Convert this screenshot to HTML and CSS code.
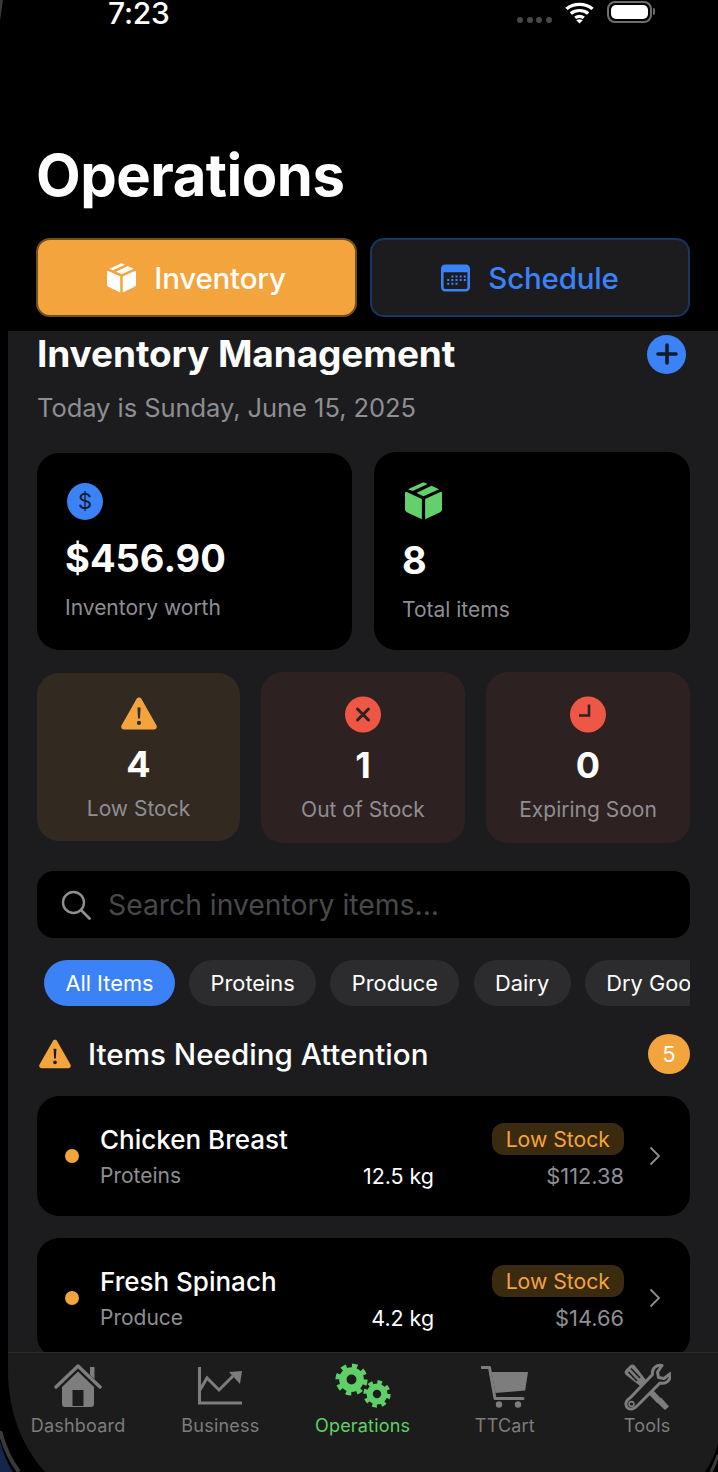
FILE: index.html
```html
<!DOCTYPE html>
<html lang="en">
<head>
<meta charset="utf-8">
<title>Operations</title>
<link rel="stylesheet" href="styles.css">
</head>
<body>
<svg class="defs" width="0" height="0" aria-hidden="true">
  <symbol id="box" viewBox="1.800 0 32.400 40" preserveAspectRatio="none">
    <path d="M12.600 3.200 17 .8c.7-.4 1.300-.4 2 0l2.600 1.400L8.600 9.600 4.400 7.500zM25 4l6.600 3.500L18 15l-6.200-3.400zM2.800 10.300 16.600 18v21.200L3.800 32c-1.300-.7-2-1.800-2-3.300V11.400c0-.4.400-.9 1-1.100zM33.200 10.300c.6.2 1 .7 1 1.100v17.300c0 1.500-.7 2.600-2 3.300l-12.800 7.200V18z"/>
  </symbol>
  <symbol id="warn" viewBox="0 0 36 32">
    <path fill-rule="evenodd" d="M15.500 1.600c1.100-2 3.900-2 5 0l14.900 26.200c1.100 1.900-.2 4.200-2.500 4.200H3.100C.8 32-.5 29.700.6 27.800zM16.400 10l.6 11h2l.6-11zM18 23.300a2.100 2.100 0 1 0 0 4.200 2.100 2.100 0 0 0 0-4.200z"/>
  </symbol>
  <symbol id="gear" viewBox="0 0 40 40">
    <circle cx="20" cy="20" r="16" fill="none" stroke="currentColor" stroke-width="7" stroke-dasharray="6.300 6.270"/>
    <circle cx="20" cy="20" r="10.500" fill="none" stroke="currentColor" stroke-width="9"/>
  </symbol>
</svg>

<main class="device">
  <header class="top">
    <div class="status">
      <span class="clock">7:23</span>
      <span class="signal"><i></i><i></i><i></i><i></i></span>
      <svg class="wifi" viewBox="0 0 30 24" preserveAspectRatio="none" aria-hidden="true">
        <path d="M1.500 7.500C9 1 21 1 28.500 7.500M6 12.500c5.200-4.300 12.800-4.300 18 0M10.500 17.300c2.700-2 6.300-2 9 0" fill="none" stroke="#fff" stroke-width="3.400"/>
        <path d="M11.600 19.800 15 23.500l3.400-3.700c-2-1.300-4.800-1.300-6.800 0z" fill="#fff"/>
      </svg>
      <span class="battery"><b></b></span>
      <span class="battery-tip"></span>
    </div>
    <h1 class="title">Operations</h1>
    <nav class="segments">
      <a class="segment segment-on">
        <svg class="seg-icon" aria-hidden="true"><use href="#box"/></svg>
        Inventory
      </a>
      <a class="segment segment-off">
        <svg class="seg-icon" viewBox="0 0 28 28" aria-hidden="true">
          <path fill-rule="evenodd" d="M4 1h20a4 4 0 0 1 4 4v18a4 4 0 0 1-4 4H4a4 4 0 0 1-4-4V5a4 4 0 0 1 4-4zm-1.500 7.500V23A1.500 1.500 0 0 0 4 24.500h20a1.500 1.500 0 0 0 1.500-1.500V8.500z"/>
          <path d="M10 11.500h2v2h-2zM14 11.500h2v2h-2zM18 11.500h2v2h-2zM22 11.500h2v2h-2zM6 15h2v2H6zM10 15h2v2h-2zM14 15h2v2h-2zM18 15h2v2h-2zM22 15h2v2h-2zM6 18.500h2v2H6zM10 18.500h2v2h-2zM14 18.500h2v2h-2z"/>
        </svg>
        Schedule
      </a>
    </nav>
  </header>

  <section class="panel">
    <div class="head">
      <h2 class="head-title">Inventory Management</h2>
      <button class="add" aria-label="Add">
        <svg viewBox="0 0 20 20" aria-hidden="true"><path d="M10 2.500v15M2.500 10h15" stroke="#101a2c" stroke-width="3" stroke-linecap="round"/></svg>
      </button>
    </div>
    <p class="today">Today is Sunday, June 15, 2025</p>

    <div class="stats">
      <article class="stat stat-worth">
        <span class="coin">$</span>
        <strong class="stat-value">$456.90</strong>
        <span class="stat-label">Inventory worth</span>
      </article>
      <article class="stat stat-total">
        <svg class="stat-box" aria-hidden="true"><use href="#box"/></svg>
        <strong class="stat-value">8</strong>
        <span class="stat-label">Total items</span>
      </article>
    </div>

    <div class="alerts">
      <article class="alert alert-low">
        <svg class="alert-icon warn-icon" aria-hidden="true"><use href="#warn"/></svg>
        <strong class="alert-num">4</strong>
        <span class="alert-label">Low Stock</span>
      </article>
      <article class="alert alert-red">
        <svg class="alert-icon" viewBox="0 0 36 36" aria-hidden="true">
          <circle cx="18" cy="18" r="18" fill="#ee5646"/>
          <path d="M12.500 12.500l11 11M23.500 12.500l-11 11" stroke="#2e2121" stroke-width="3" stroke-linecap="round"/>
        </svg>
        <strong class="alert-num">1</strong>
        <span class="alert-label">Out of Stock</span>
      </article>
      <article class="alert alert-red">
        <svg class="alert-icon" viewBox="0 0 36 36" aria-hidden="true">
          <circle cx="18" cy="18" r="18" fill="#ee5646"/>
          <path d="M19 8v11H9" fill="none" stroke="#2e2121" stroke-width="2.600"/>
        </svg>
        <strong class="alert-num">0</strong>
        <span class="alert-label">Expiring Soon</span>
      </article>
    </div>

    <div class="search">
      <svg class="search-icon" viewBox="0 0 30 30" aria-hidden="true">
        <circle cx="12.500" cy="12.500" r="10.500" fill="none" stroke="#8e8e93" stroke-width="2.400"/>
        <path d="M20 20l8.500 8.500" stroke="#8e8e93" stroke-width="2.800" stroke-linecap="round"/>
      </svg>
      <span class="search-text">Search inventory items...</span>
    </div>

    <div class="chips">
      <span class="chip chip-on">All Items</span>
      <span class="chip">Proteins</span>
      <span class="chip">Produce</span>
      <span class="chip">Dairy</span>
      <span class="chip">Dry Goods</span>
    </div>

    <div class="attention">
      <svg class="attention-icon" aria-hidden="true"><use href="#warn"/></svg>
      <h3 class="attention-title">Items Needing Attention</h3>
      <span class="count">5</span>
    </div>

    <article class="item">
      <span class="dot"></span>
      <div class="item-main">
        <div class="item-line">
          <span class="item-name">Chicken Breast</span>
          <span class="pill">Low Stock</span>
        </div>
        <div class="item-line item-sub">
          <span class="item-cat">Proteins</span>
          <span class="item-qty">12.5 kg</span>
          <span class="item-price">$112.38</span>
        </div>
      </div>
      <svg class="chev" viewBox="0 0 12 20" aria-hidden="true"><path d="M1.500 1.500 10 10l-8.500 8.500" fill="none" stroke="#8e8e93" stroke-width="1.800"/></svg>
    </article>

    <article class="item">
      <span class="dot"></span>
      <div class="item-main">
        <div class="item-line">
          <span class="item-name">Fresh Spinach</span>
          <span class="pill">Low Stock</span>
        </div>
        <div class="item-line item-sub">
          <span class="item-cat">Produce</span>
          <span class="item-qty">4.2 kg</span>
          <span class="item-price">$14.66</span>
        </div>
      </div>
      <svg class="chev" viewBox="0 0 12 20" aria-hidden="true"><path d="M1.500 1.500 10 10l-8.500 8.500" fill="none" stroke="#8e8e93" stroke-width="1.800"/></svg>
    </article>
  </section>

  <nav class="tabs">
    <a class="tab">
      <svg class="tab-icon" viewBox="0 0 48 48" aria-hidden="true">
        <path d="M2 24 24 3l22 21" fill="none" stroke="currentColor" stroke-width="3.400" stroke-linecap="round" stroke-linejoin="round"/>
        <path d="M36 4h4.500v12L36 12z"/>
        <path fill-rule="evenodd" d="M24 8.500 40 24v17a3 3 0 0 1-3 3H11a3 3 0 0 1-3-3V24zM18.500 27v16h11V27z"/>
      </svg>
      <span class="tab-label">Dashboard</span>
    </a>
    <a class="tab">
      <svg class="tab-icon" viewBox="0 0 48 48" aria-hidden="true">
        <path d="M3.500 4v36H46" fill="none" stroke="currentColor" stroke-width="3"/>
        <path d="M4 27 11 15l12 12 14-14" fill="none" stroke="currentColor" stroke-width="3"/>
        <path d="M33 9 46 8l-2 13z"/>
      </svg>
      <span class="tab-label">Business</span>
    </a>
    <a class="tab tab-on">
      <svg class="tab-icon tab-gears" viewBox="0 0 56 45" aria-hidden="true">
        <use href="#gear" x="0" y="0" width="33" height="33"/>
        <use href="#gear" x="28" y="17" width="28" height="28"/>
      </svg>
      <span class="tab-label">Operations</span>
    </a>
    <a class="tab">
      <svg class="tab-icon" viewBox="0 0 48 48" aria-hidden="true">
        <path d="M1 4.500h7.500l5.500 31h28" fill="none" stroke="currentColor" stroke-width="3" stroke-linecap="round" stroke-linejoin="round"/>
        <path d="M10.500 9H47l-2.800 18.500L14.500 30z"/>
        <circle cx="18" cy="41.500" r="3.200"/>
        <circle cx="37" cy="41.500" r="3.200"/>
      </svg>
      <span class="tab-label">TTCart</span>
    </a>
    <a class="tab">
      <svg class="tab-icon" viewBox="0 0 48 48" aria-hidden="true">
        <path d="M2.500 7 7 2.500c1.500-1.500 3.500-1.300 5 .2L24.500 19 19 24.500 3 12c-1.600-1.300-1.800-3.500-.5-5z"/>
        <path d="M8 5.500 17 15M5.500 9 14 18" stroke="#1b1c1b" stroke-width="1.600"/>
        <path d="M22 27 34 40l4-4.500L26 23z"/>
        <path d="M33.500 39 42 47l4-3.500-8-9z"/>
        <path d="M39 2.500c-5-1.300-10.500 2.500-9.500 9L8 34c-2 2-6 3.500-5 8 .6 2.800 3 4.500 6 4 3.500-.6 4.800-3 7-5l21-21c6 1.500 11-2.500 10.500-9.500L41 15.500l-5.500-1-1-5.500z" fill="#1b1c1b" stroke="currentColor" stroke-width="3" stroke-linejoin="round"/>
        <circle cx="8.500" cy="41" r="2.400" fill="none" stroke="currentColor" stroke-width="1.600"/>
      </svg>
      <span class="tab-label">Tools</span>
    </a>
  </nav>

  <svg class="bezel" viewBox="0 0 718 1472" aria-hidden="true">
    <path d="M0 1370h8c0 42 14 76 37 102H0z" fill="#000"/>
    <path d="M0 1431c4 15 10 29 19 41" fill="none" stroke="#39393b" stroke-width="4"/>
    <path d="M0 1441c3 11 7 22 13 31H0z" fill="#16264a"/>
    <path d="M718 1444c-3 10-7 19-13 28h13z" fill="#000"/>
    <path d="M718 1455c-2 6-4 11-7 17" fill="none" stroke="#39393b" stroke-width="3"/>
    <path d="M0 21 3 0H0z" fill="#39393b"/>
  </svg>
</main>
</body>
</html>
```

FILE: styles.css
```css
* { box-sizing: border-box; margin: 0; padding: 0; }

html, body {
  width: 718px;
  height: 1472px;
  overflow: hidden;
  background: #000;
}

body {
  font-family: Inter, "Liberation Sans", sans-serif;
  color: #fff;
}

.defs { position: absolute; }

.device {
  position: relative;
  width: 718px;
  height: 1472px;
  display: flex;
  flex-direction: column;
  overflow: hidden;
  background: #000;
}

/* Header */
.top {
  height: 331px;
  flex: none;
  padding: 0 28px 0 36px;
}

.status {
  height: 32px;
  display: flex;
  align-items: flex-start;
  padding: 1px 35px 0 72px;
}

.clock {
  font-size: 30px;
  font-weight: 500;
  line-height: 24px;
  letter-spacing: -0.2px;
  margin-right: auto;
}

.signal {
  display: flex;
  gap: 3.600px;
  margin: 16px 13px 0 0;
}

.signal i {
  width: 6px;
  height: 6px;
  border-radius: 50%;
  background: #48484a;
}

.wifi {
  width: 29px;
  height: 22px;
  margin: 1px 13px 0 0;
}

.battery {
  width: 45px;
  height: 22px;
  padding: 2px;
  border: 2px solid #6e6e70;
  border-radius: 8px;
}

.battery b {
  display: block;
  height: 100%;
  border-radius: 5px;
  background: #fff;
}

.battery-tip {
  width: 2px;
  height: 7px;
  margin: 7px 0 0 1px;
  border-radius: 0 2px 2px 0;
  background: #6e6e70;
}

.title {
  margin-top: 109px;
  font-size: 58px;
  line-height: 68px;
  font-weight: 700;
  letter-spacing: -0.5px;
}

.segments {
  margin-top: 29px;
  display: grid;
  grid-template-columns: 321px 320px;
  gap: 13px;
}

.segment {
  height: 79px;
  display: flex;
  align-items: center;
  justify-content: center;
  gap: 18px;
  border-radius: 14px;
  font-size: 29.500px;
  font-weight: 500;
  letter-spacing: -0.2px;
  border: 2px solid;
}

.segment-on {
  background: #f4a43c;
  border-color: #70501e;
}

.segment-off {
  background: #1c1c1e;
  border-color: #17355e;
  color: #3a82f6;
}

.seg-icon {
  width: 29px;
  height: 30px;
  fill: currentColor;
}

/* Panel */
.panel {
  height: 1021px;
  flex: none;
  margin-left: 8px;
  padding: 0 28px 0 29px;
  background: #1c1c1e;
  overflow: hidden;
}

.head {
  height: 46px;
  display: flex;
  align-items: center;
  justify-content: space-between;
}

.head-title {
  font-size: 37px;
  line-height: 46px;
  font-weight: 700;
  letter-spacing: -0.1px;
}

.add {
  width: 39px;
  height: 39px;
  margin-right: 4px;
  border: 0;
  border-radius: 50%;
  background: #3a82f6;
  display: flex;
  align-items: center;
  justify-content: center;
}

.add svg { width: 24px; height: 24px; }

.today {
  margin-top: 15px;
  font-size: 25.500px;
  line-height: 32px;
  color: #8e8e93;
  letter-spacing: -0.05px;
}

.stats {
  margin-top: 28px;
  display: grid;
  grid-template-columns: 315px 316px;
  gap: 22px;
}

.stat {
  height: 198px;
  display: flex;
  flex-direction: column;
  padding: 30px 28px 0;
  background: #000;
  border-radius: 22px;
}

.stat-worth {
  height: 197px;
  margin-top: 1px;
}

.coin {
  width: 36px;
  height: 37px;
  border-radius: 50%;
  background: #3a82f6;
  color: #0d1a30;
  font-size: 22px;
  line-height: 37px;
  text-align: center;
  margin-left: 2px;
}

.stat-box {
  width: 37px;
  height: 38px;
  margin-left: 3px;
  fill: #63d06b;
}

.stat-value {
  margin-top: 15px;
  font-size: 38px;
  line-height: 46px;
  font-weight: 700;
}

.stat-total .stat-value { margin-top: 17px; }

.stat-label {
  margin-top: 13px;
  font-size: 21px;
  line-height: 28px;
  color: #8e8e93;
}

.alerts {
  margin-top: 22px;
  display: grid;
  grid-template-columns: 203px 204px 204px;
  gap: 21px;
}

.alert {
  height: 171px;
  padding-top: 24px;
  display: flex;
  flex-direction: column;
  align-items: center;
  border-radius: 22px;
}

.alert-low {
  height: 168px;
  margin-top: 1px;
  padding-top: 22px;
  background: #322a20;
}

.alert-red { background: #2e2121; }

.alert-icon {
  width: 36px;
  height: 37px;
}

.warn-icon { fill: #f4a43c; }

.alert-num {
  margin-top: 10px;
  font-size: 36px;
  line-height: 44px;
  font-weight: 700;
}

.alert-label {
  margin-top: 10px;
  font-size: 21px;
  line-height: 26px;
  color: #8e8e93;
}

.search {
  margin-top: 28px;
  height: 67px;
  display: flex;
  align-items: center;
  padding-left: 24px;
  background: #000;
  border-radius: 17px;
}

.search-icon {
  width: 30px;
  height: 30px;
  margin-right: 17px;
}

.search-text {
  font-size: 28.300px;
  line-height: 36px;
  padding-top: 1px;
  color: #48484a;
}

.chips {
  margin-top: 22px;
  height: 46px;
  display: flex;
  gap: 14.300px;
  padding-left: 7px;
  overflow: hidden;
}

.chip {
  flex: none;
  height: 46px;
  padding: 0 21.400px;
  display: flex;
  align-items: center;
  border-radius: 23px;
  background: #2c2c2e;
  font-size: 21.800px;
}

.chip-on { background: #3a82f6; }

.attention {
  margin-top: 28px;
  height: 40px;
  display: flex;
  align-items: center;
}

.attention-icon {
  width: 32px;
  height: 30px;
  margin: 0 17px 0 2px;
  fill: #f4a43c;
}

.attention-title {
  flex: 1;
  font-size: 29.600px;
  font-weight: 500;
}

.count {
  width: 42px;
  height: 40px;
  border-radius: 50%;
  background: #f4a43c;
  font-size: 22px;
  line-height: 40px;
  text-align: center;
}

.item {
  margin-top: 22px;
  height: 120px;
  display: flex;
  align-items: center;
  padding: 0 29px 0 28px;
  background: #000;
  border-radius: 22px;
}

.dot {
  flex: none;
  width: 14px;
  height: 14px;
  border-radius: 50%;
  background: #f4a43c;
}

.item-main {
  flex: 1;
  margin: 0 25px 0 21px;
  display: flex;
  flex-direction: column;
  gap: 6px;
}

.item-line {
  display: flex;
  align-items: center;
  justify-content: space-between;
}

.item-name {
  padding-top: 2px;
  font-size: 26px;
  line-height: 30px;
  font-weight: 500;
}

.pill {
  height: 32px;
  padding: 0 14px;
  display: flex;
  align-items: center;
  border-radius: 12px;
  background: #3a2a10;
  color: #f4a43c;
  font-size: 21.200px;
}

.item-sub {
  padding-top: 2px;
  font-size: 21px;
  line-height: 26px;
}

.item-cat { flex: 1; color: #8e8e93; }
.item-qty { color: #fff; font-size: 21.400px; }
.item-price { width: 190px; text-align: right; color: #8e8e93; font-size: 21.800px; }

.chev {
  flex: none;
  width: 12px;
  height: 20px;
}

/* Tabs */
.tabs {
  flex: 1;
  margin-left: 8px;
  display: flex;
  align-items: flex-start;
  padding-top: 10px;
  background: #1b1c1b;
  border-top: 1px solid #2c2c2e;
}

.tab {
  flex: 0 0 142.250px;
  display: flex;
  flex-direction: column;
  align-items: center;
  color: #7d7d7d;
}

.tab:first-child { margin-left: -1px; }

.tab-on { color: #5fd068; }

.tab-icon {
  width: 48px;
  height: 48px;
  fill: currentColor;
}

.tab-gears {
  width: 56px;
  height: 45px;
  margin-bottom: 3px;
}

.tab-label {
  margin-top: 3px;
  font-size: 18px;
  line-height: 24px;
  letter-spacing: 0.2px;
}

.bezel {
  position: absolute;
  inset: 0;
  width: 718px;
  height: 1472px;
  pointer-events: none;
}
```
